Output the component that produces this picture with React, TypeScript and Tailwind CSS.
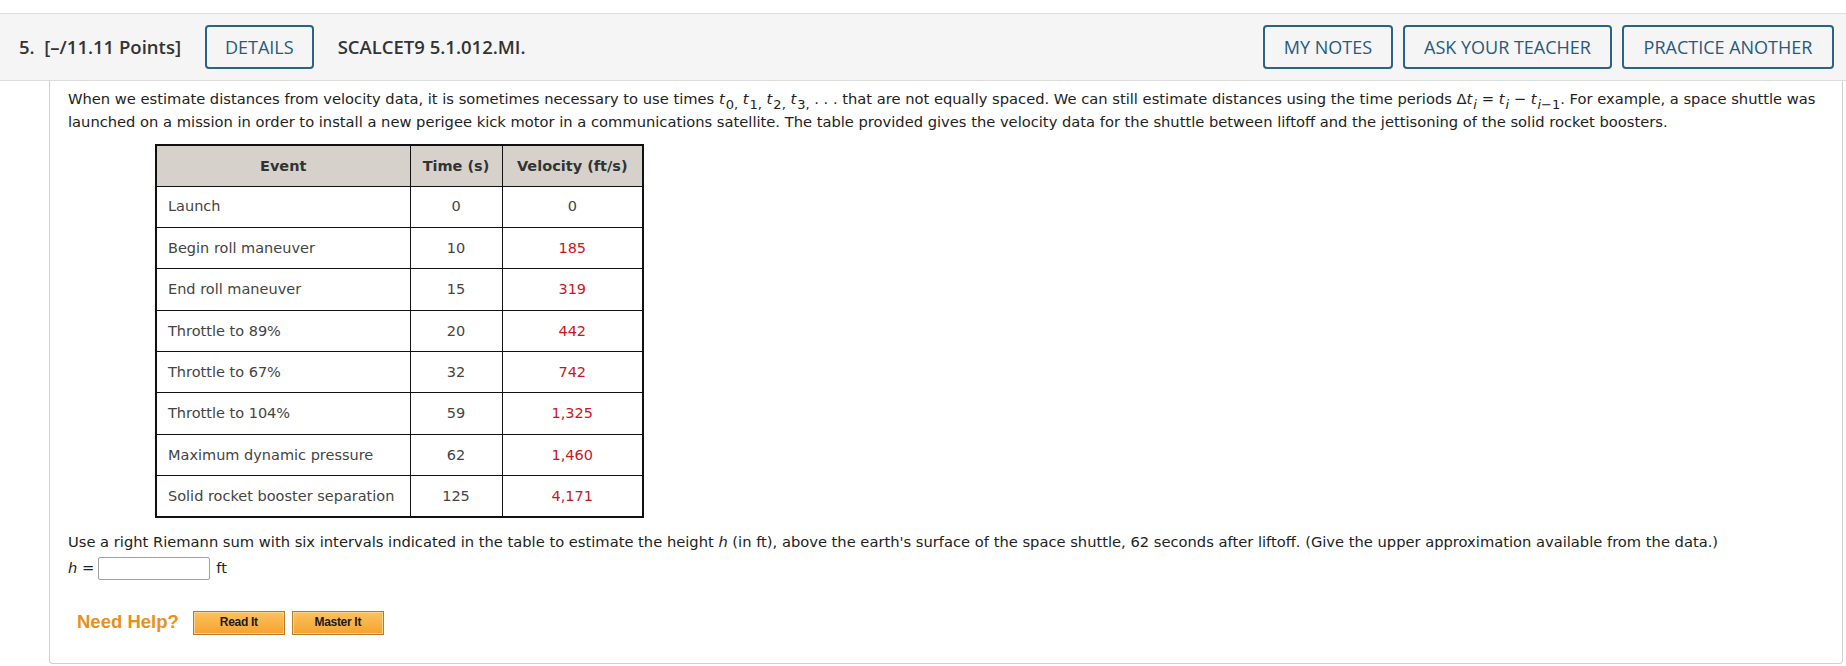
import React from "react";

const body = { fontFamily: '"DejaVu Sans", Verdana, sans-serif' };
const head = { fontFamily: '"Open Sans", "Noto Sans", sans-serif' };

function T({ sub }: { sub: React.ReactNode }) {
  return (
    <span className="whitespace-nowrap">
      <i>t</i>
      <span className="text-[13px] ml-[1px] relative top-[5px] leading-[0]">{sub}</span>
    </span>
  );
}

const rows: [string, string, string][] = [
  ["Launch", "0", "0"],
  ["Begin roll maneuver", "10", "185"],
  ["End roll maneuver", "15", "319"],
  ["Throttle to 89%", "20", "442"],
  ["Throttle to 67%", "32", "742"],
  ["Throttle to 104%", "59", "1,325"],
  ["Maximum dynamic pressure", "62", "1,460"],
  ["Solid rocket booster separation", "125", "4,171"],
];

function HBtn({ children }: { children: React.ReactNode }) {
  return (
    <div className="h-[44px] border-2 border-[#2b6386] rounded-[4px] flex items-center justify-center text-[#285a7c] text-[18px] font-medium px-[18px]">
      {children}
    </div>
  );
}

function HelpBtn({ children }: { children: React.ReactNode }) {
  return (
    <div
      className="w-[92px] h-[24px] border border-[#b97a26] bg-gradient-to-b from-[#fcc25c] to-[#f5a22d] shadow-[inset_0_0_0_1px_#fbd590] flex items-center justify-center text-[12px] font-bold text-[#1b1b1b] tracking-[-0.3px]"
      style={{ fontFamily: '"Liberation Sans", Arial, sans-serif' }}
    >
      {children}
    </div>
  );
}

export default function App() {
  return (
    <div className="bg-white w-[1846px] h-[666px] pt-[13px]" style={body}>
      <div
        className="h-[68px] border-y border-[#dcdcdc] bg-[#f5f5f5] flex items-center pl-[19px] pr-[12px]"
        style={head}
      >
        <span className="text-[18.5px] font-semibold text-[#333]">5.&nbsp;&nbsp;[–/11.11 Points]</span>
        <div className="ml-[24px]">
          <HBtn>DETAILS</HBtn>
        </div>
        <span className="ml-[24px] text-[18.5px] font-semibold text-[#333]">SCALCET9 5.1.012.MI.</span>
        <div className="ml-auto flex gap-[10px]">
          <div className="w-[130px]">
            <HBtn>MY NOTES</HBtn>
          </div>
          <div className="w-[209px]">
            <HBtn>ASK YOUR TEACHER</HBtn>
          </div>
          <div className="w-[212px]">
            <HBtn>PRACTICE ANOTHER</HBtn>
          </div>
        </div>
      </div>

      <div className="ml-[49px] mr-[3px] h-[583px] border-x border-b border-[#d0d0d0] rounded-b-[4px] pl-[18px] pr-[18px] pt-[7px] text-[14.7px] text-[#222] leading-[22.5px]">
        <p>
          When we estimate distances from velocity data, it is sometimes necessary to use times{" "}
          <T sub="0," /> <T sub="1," /> <T sub="2," /> <T sub="3," /> .&nbsp;.&nbsp;. that are not equally spaced. We
          can still estimate distances using the time periods Δ<T sub={<i>i</i>} /> = <T sub={<i>i</i>} /> −{" "}
          <T sub={<span><i>i</i>−1</span>} />. For example, a space shuttle was launched on a mission in order to
          install a new perigee kick motor in a communications satellite. The table provided gives the velocity data
          for the shuttle between liftoff and the jettisoning of the solid rocket boosters.
        </p>

        <table className="mt-[11px] ml-[87px] border-collapse border-2 border-[#111] text-[14.5px] text-[#444]">
          <thead>
            <tr className="h-[41px] bg-[#d6d2cb] text-[#333]">
              <th className="w-[254px] border border-[#111] font-bold">Event</th>
              <th className="w-[92px] border border-[#111] font-bold">Time (s)</th>
              <th className="w-[141px] border border-[#111] font-bold">Velocity (ft/s)</th>
            </tr>
          </thead>
          <tbody>
            {rows.map((r, i) => (
              <tr key={i} className="h-[41.4px]">
                <td className="border border-[#111] pl-[11px]">{r[0]}</td>
                <td className="border border-[#111] text-center">{r[1]}</td>
                <td className={"border border-[#111] text-center " + (i === 0 ? "" : "text-[#c8161d]")}>{r[2]}</td>
              </tr>
            ))}
          </tbody>
        </table>

        <p className="mt-[13px]">
          Use a right Riemann sum with six intervals indicated in the table to estimate the height <i>h</i> (in ft),
          above the earth's surface of the space shuttle, 62 seconds after liftoff. (Give the upper approximation
          available from the data.)
        </p>
        <div className="mt-[3px] h-[24px] flex items-center">
          <span>
            <i>h</i> =
          </span>
          <div className="ml-[4px] w-[112px] h-[23px] border border-[#a0a0a0] rounded-[2px] bg-white" />
          <span className="ml-[6px]">ft</span>
        </div>

        <div className="mt-[30px] ml-[9px] flex items-center h-[24px]">
          <span
            className="text-[18.5px] font-bold text-[#e8901c]"
            style={{ fontFamily: '"Liberation Sans", Arial, sans-serif' }}
          >
            Need Help?
          </span>
          <div className="ml-[14px] flex gap-[7px]">
            <HelpBtn>Read It</HelpBtn>
            <HelpBtn>Master It</HelpBtn>
          </div>
        </div>
      </div>
    </div>
  );
}
